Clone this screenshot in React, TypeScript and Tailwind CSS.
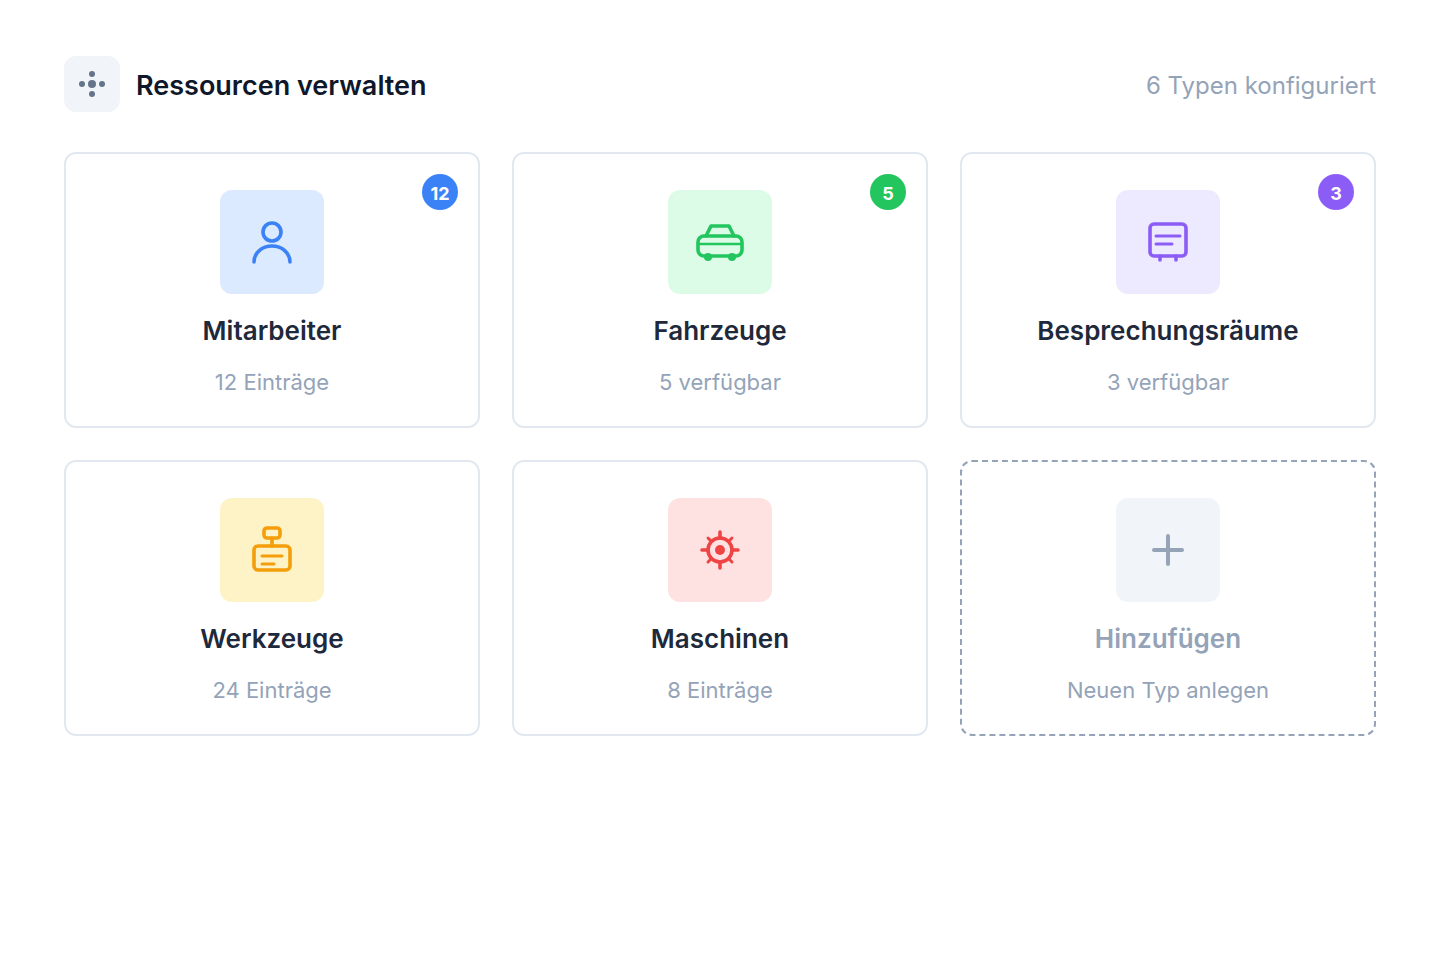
import React from "react";

const StaffIcon = () => (
    <>
        <circle cx="24" cy="14" r="9" />
        <path d="M6 44c0-9 8-16 18-16s18 7 18 16" />
    </>
);

const CarIcon = () => (
    <>
        <rect x="2" y="18" width="44" height="20" rx="6" />
        <path d="M10 18l5-10h18l5 10" />
        <path d="M2 26h44" strokeWidth="2.4" />
        <circle cx="12" cy="39" r="4" fill="currentColor" stroke="none" />
        <circle cx="36" cy="39" r="4" fill="currentColor" stroke="none" />
    </>
);

const RoomIcon = () => (
    <>
        <rect x="6" y="6" width="36" height="32" rx="4" />
        <path d="M12 18h24M12 26h16" strokeWidth="3" />
        <path d="M16 38v4M32 38v4" />
    </>
);

const ToolIcon = () => (
    <>
        <rect x="16" y="2" width="16" height="10" rx="3" />
        <path d="M24 12v8" />
        <rect x="6" y="20" width="36" height="24" rx="4" />
        <path d="M14 30h20M14 38h12" strokeWidth="3" />
    </>
);

const MachineIcon = () => (
    <>
        <circle cx="24" cy="24" r="12" />
        <circle cx="24" cy="24" r="5" fill="currentColor" stroke="none" />
        <path d="M24 6v6M24 36v6M6 24h6M36 24h6" />
        <path d="M12 12l3 3M33 33l3 3M36 12l-3 3M15 33l-3 3" strokeWidth="3" />
    </>
);

const PlusIcon = () => <path d="M24 10v28M10 24h28" strokeWidth="4" />;

const App = () => {
    const resources = [
        {
            title: "Mitarbeiter",
            info: "12 Einträge",
            icon: <StaffIcon />,
            tile: "bg-[#dbeafe] text-[#3b82f6]",
            badge: "12",
            badgeColor: "bg-[#3b82f6]",
        },
        {
            title: "Fahrzeuge",
            info: "5 verfügbar",
            icon: <CarIcon />,
            tile: "bg-[#dcfce7] text-[#22c55e]",
            badge: "5",
            badgeColor: "bg-[#22c55e]",
        },
        {
            title: "Besprechungsräume",
            info: "3 verfügbar",
            icon: <RoomIcon />,
            tile: "bg-[#ede9fe] text-[#8b5cf6]",
            badge: "3",
            badgeColor: "bg-[#8b5cf6]",
        },
        {
            title: "Werkzeuge",
            info: "24 Einträge",
            icon: <ToolIcon />,
            tile: "bg-[#fef3c7] text-[#f59e0b]",
        },
        {
            title: "Maschinen",
            info: "8 Einträge",
            icon: <MachineIcon />,
            tile: "bg-[#fee2e2] text-[#ef4444]",
        },
        {
            title: "Hinzufügen",
            info: "Neuen Typ anlegen",
            icon: <PlusIcon />,
            tile: "bg-[#f1f5f9] text-[#94a3b8]",
            isNew: true,
        },
    ];

    return (
        <main className="px-16 py-14 bg-white font-['Inter',sans-serif]">
            <header className="flex items-center justify-between mb-10">
                <div className="flex items-center gap-4">
                    <div className="size-14 rounded-xl bg-[#f1f5f9] text-[#64748b] flex items-center justify-center">
                        <svg className="size-7" viewBox="0 0 28 28" fill="currentColor" aria-hidden="true">
                            <circle cx="14" cy="14" r="4" />
                            <circle cx="14" cy="4" r="3" />
                            <circle cx="14" cy="24" r="3" />
                            <circle cx="4" cy="14" r="3" />
                            <circle cx="24" cy="14" r="3" />
                        </svg>
                    </div>
                    <h1 className="pt-1 text-[27px] font-semibold text-[#0f172a]">Ressourcen verwalten</h1>
                </div>
                <p className="pt-1 text-2xl text-[#94a3b8]">6 Typen konfiguriert</p>
            </header>

            <div className="grid grid-cols-3 gap-8">
                {resources.map((resource) => (
                    <button
                        key={resource.title}
                        type="button"
                        className={`relative flex flex-col items-center rounded-xl border-2 px-6 pt-9 pb-7 cursor-pointer ${
                            resource.isNew ? "border-dashed border-[#94a3b8]" : "border-[#e2e8f0]"
                        }`}
                    >
                        {resource.badge && (
                            <span
                                className={`absolute top-5 right-5 size-9 pt-1 rounded-full flex items-center justify-center text-lg font-bold text-white ${resource.badgeColor}`}
                            >
                                {resource.badge}
                            </span>
                        )}
                        <span className={`size-26 rounded-xl flex items-center justify-center ${resource.tile}`}>
                            <svg
                                className="size-12"
                                viewBox="0 0 48 48"
                                fill="none"
                                stroke="currentColor"
                                strokeWidth="3.6"
                                strokeLinecap="round"
                                strokeLinejoin="round"
                                aria-hidden="true"
                            >
                                {resource.icon}
                            </svg>
                        </span>
                        <span
                            className={`mt-5 text-[26px] leading-[34px] font-semibold ${
                                resource.isNew ? "text-[#94a3b8]" : "text-[#1e293b]"
                            }`}
                        >
                            {resource.title}
                        </span>
                        <span className="mt-[18px] text-[22px] leading-8 text-[#94a3b8]">{resource.info}</span>
                    </button>
                ))}
            </div>
        </main>
    );
};

export default App;
